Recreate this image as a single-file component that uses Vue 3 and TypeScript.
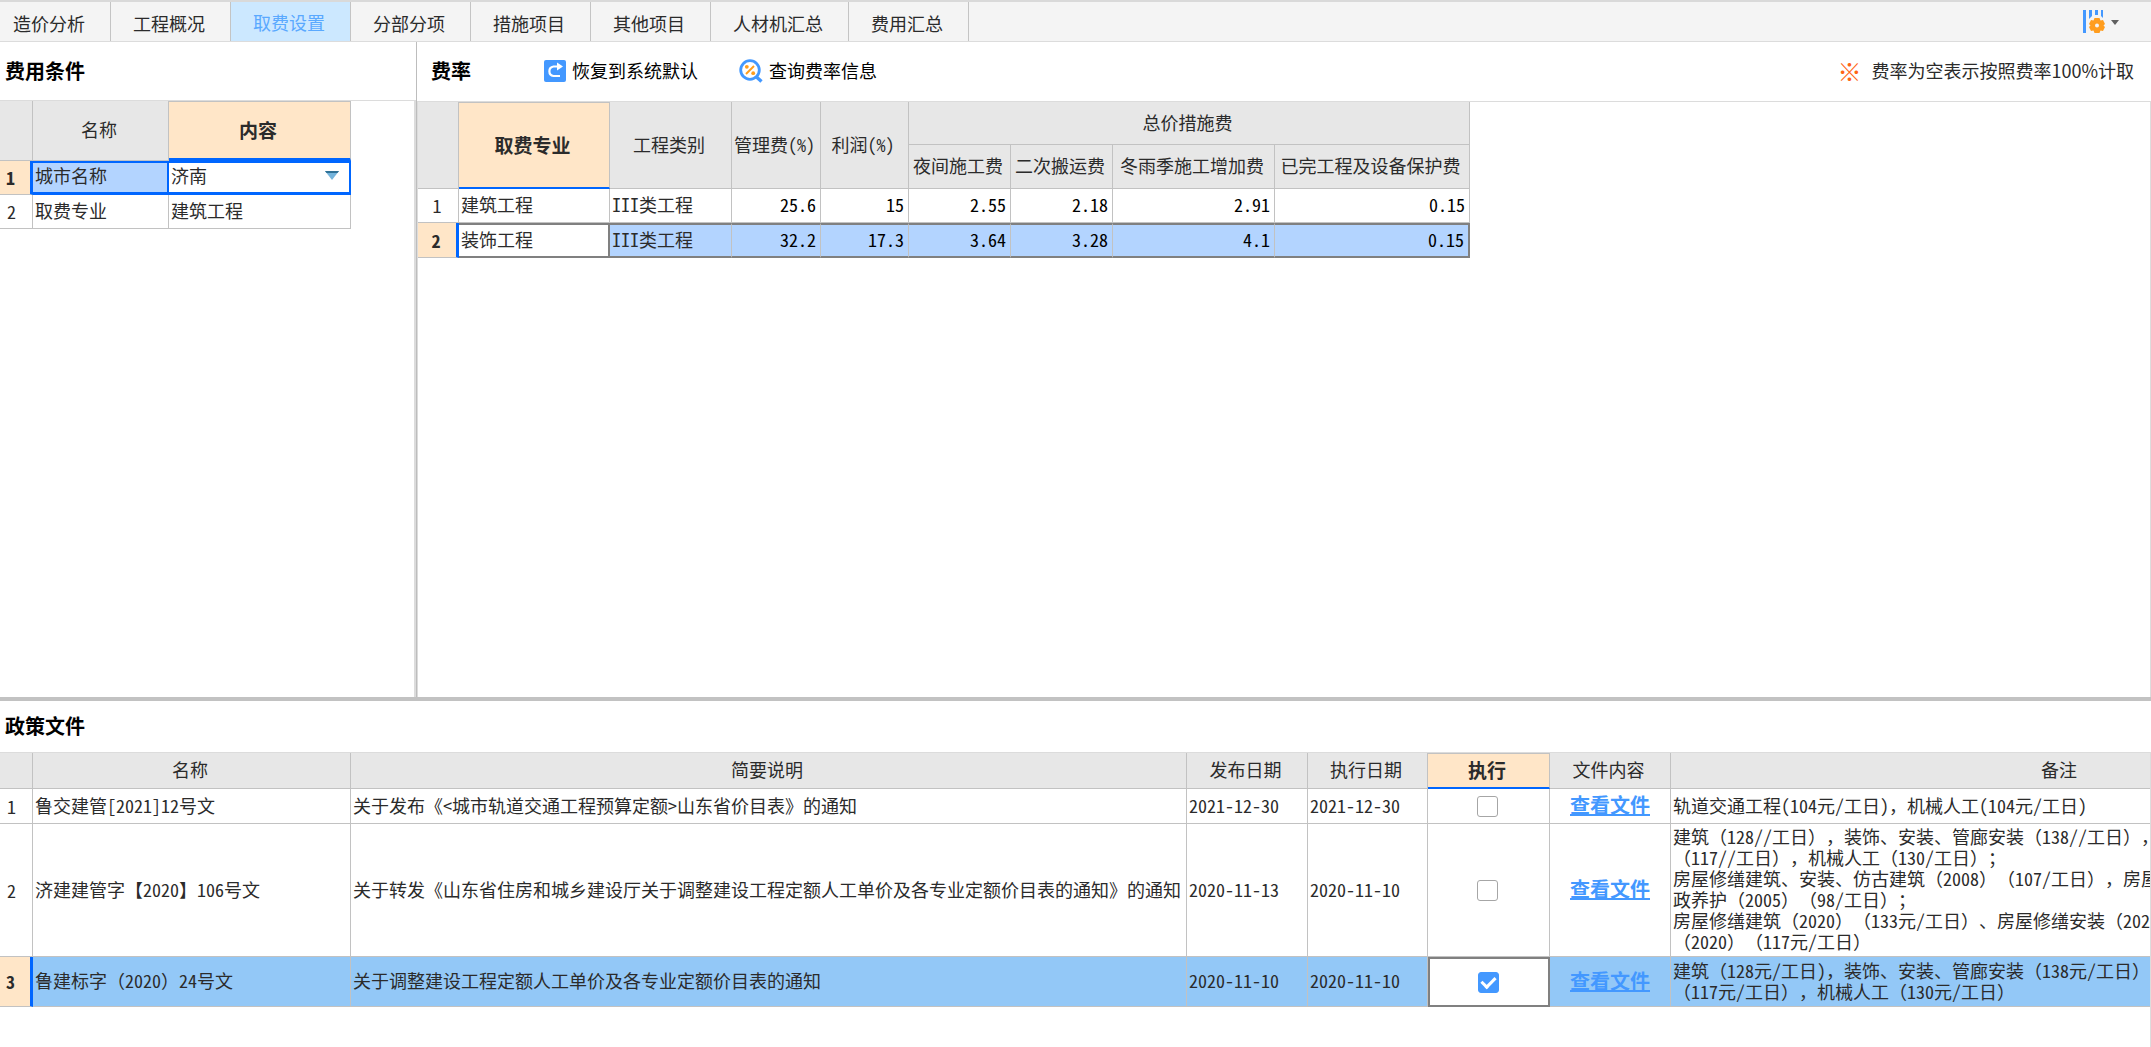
<script setup lang="ts">
import { ref } from 'vue'

interface FeeRow {
  major: string
  category: string
  rates: string[]
}

interface PolicyRow {
  name: string
  summary: string
  published: string
  effective: string
  applied: boolean
  notes: string[]
}

const tabs: string[] = ['造价分析', '工程概况', '取费设置', '分部分项', '措施项目', '其他项目', '人材机汇总', '费用汇总']
const activeTab = ref('取费设置')
const city = ref('济南')

const feeRows: FeeRow[] = [
  { major: '建筑工程', category: 'III类工程', rates: ['25.6', '15', '2.55', '2.18', '2.91', '0.15'] },
  { major: '装饰工程', category: 'III类工程', rates: ['32.2', '17.3', '3.64', '3.28', '4.1', '0.15'] },
]

const policies = ref<PolicyRow[]>([
  {
    name: '鲁交建管[2021]12号文',
    summary: '关于发布《<城市轨道交通工程预算定额>山东省价目表》的通知',
    published: '2021-12-30',
    effective: '2021-12-30',
    applied: false,
    notes: ['轨道交通工程(104元/工日)，机械人工(104元/工日)'],
  },
  {
    name: '济建建管字【2020】106号文',
    summary: '关于转发《山东省住房和城乡建设厅关于调整建设工程定额人工单价及各专业定额价目表的通知》的通知',
    published: '2020-11-13',
    effective: '2020-11-10',
    applied: false,
    notes: [
      '建筑（128//工日），装饰、安装、管廊安装（138//工日），',
      '（117//工日），机械人工（130/工日）；',
      '房屋修缮建筑、安装、仿古建筑（2008）（107/工日），房屋',
      '政养护（2005）（98/工日）；',
      '房屋修缮建筑（2020）（133元/工日）、房屋修缮安装（202',
      '（2020）（117元/工日）',
    ],
  },
  {
    name: '鲁建标字（2020）24号文',
    summary: '关于调整建设工程定额人工单价及各专业定额价目表的通知',
    published: '2020-11-10',
    effective: '2020-11-10',
    applied: true,
    notes: ['建筑（128元/工日)，装饰、安装、管廊安装（138元/工日）', '（117元/工日），机械人工（130元/工日）'],
  },
])
</script>

<template>
  <div class="page">
    <nav class="tabbar">
      <button
        v-for="tab in tabs"
        :key="tab"
        type="button"
        class="tab"
        :class="{ active: tab === activeTab }"
        @click="activeTab = tab"
      >{{ tab }}</button>
      <button type="button" class="columns-button" aria-label="列设置">
        <svg width="36" height="24" viewBox="0 0 36 24">
          <g fill="#4398ff">
            <rect x="0" y="0" width="3" height="23" />
            <path d="M6 0h3v6l-3 3z" />
            <rect x="12" y="0" width="3" height="5" />
            <path d="M18 0h2v8l-2-2z" />
          </g>
          <path fill="#ff9d1e" d="M11.500 8h5l1 2.500 2.500-.5 2 4-1.500 1.500 1.500 1.500-2 4-2.500-.5-1 2.500h-5l-1-2.500-2.500.5-2-4 1.500-1.500-1.500-1.500 2-4 2.500.5z" />
          <circle cx="14" cy="15.500" r="2" fill="#f4f4f4" />
          <path fill="#606060" d="M28 10h8l-4 5z" />
        </svg>
      </button>
    </nav>

    <main class="workspace">
      <section class="conditions">
        <header class="panel-head"><h2>费用条件</h2></header>
        <div class="panel-body">
          <table class="grid condition-grid">
            <colgroup><col class="w33"><col class="w136"><col class="w182"></colgroup>
            <thead>
              <tr><th></th><th>名称</th><th class="current">内容</th></tr>
            </thead>
            <tbody>
              <tr class="picked">
                <th class="num">1</th>
                <td><label for="city">城市名称</label></td>
                <td class="editor">
                  <div class="combo">
                    <select id="city" v-model="city"><option>济南</option></select>
                    <svg width="14" height="9" viewBox="0 0 14 9">
                      <path d="M0 0h14L7 9z" fill="#74b4dc" />
                      <path d="M0 0h14l-1.500 2h-11z" fill="#2f7196" />
                    </svg>
                  </div>
                </td>
              </tr>
              <tr><th class="num">2</th><td>取费专业</td><td>建筑工程</td></tr>
            </tbody>
          </table>
        </div>
      </section>

      <section class="rates">
        <header class="panel-head">
          <h2>费率</h2>
          <button type="button" class="tool restore">
            <svg width="22" height="22" viewBox="0 0 22 22">
              <rect width="22" height="22" rx="2" fill="#4398ff" />
              <path d="M14 6.500H9.500a4.800 4.800 0 0 0 0 9.500H16" fill="none" stroke="#fff" stroke-width="2.200" />
              <path d="M13 2.500l6 4-6 4z" fill="#fff" />
            </svg>
            <span>恢复到系统默认</span>
          </button>
          <button type="button" class="tool query">
            <svg width="24" height="24" viewBox="0 0 24 24">
              <circle cx="11" cy="11" r="9.300" fill="#fff" stroke="#4398ff" stroke-width="2.800" />
              <path d="M17.500 18l5 4.500" stroke="#4398ff" stroke-width="3.400" />
              <path d="M7 15l8-8" stroke="#ff9d1e" stroke-width="2" />
              <circle cx="7.800" cy="7.800" r="1.900" fill="#ff9d1e" />
              <circle cx="14.200" cy="14.200" r="1.900" fill="#ff9d1e" />
            </svg>
            <span>查询费率信息</span>
          </button>
          <p class="hint"><span class="mark">※</span>费率为空表示按照费率100%计取</p>
        </header>
        <div class="panel-body">
          <table class="grid rate-grid">
            <colgroup>
              <col class="w41"><col class="w151"><col class="w122"><col class="w89"><col class="w88">
              <col class="w102"><col class="w102"><col class="w162"><col class="w195">
            </colgroup>
            <thead>
              <tr>
                <th rowspan="2"></th>
                <th rowspan="2" class="current">取费专业</th>
                <th rowspan="2">工程类别</th>
                <th rowspan="2">管理费(%)</th>
                <th rowspan="2">利润(%)</th>
                <th colspan="4">总价措施费</th>
              </tr>
              <tr><th>夜间施工费</th><th>二次搬运费</th><th>冬雨季施工增加费</th><th>已完工程及设备保护费</th></tr>
            </thead>
            <tbody>
              <tr v-for="(row, i) in feeRows" :key="row.major" :class="{ picked: i === 1 }">
                <th class="num">{{ i + 1 }}</th>
                <td>{{ row.major }}</td>
                <td>{{ row.category }}</td>
                <td v-for="(rate, j) in row.rates" :key="j" class="value">{{ rate }}</td>
              </tr>
            </tbody>
          </table>
        </div>
      </section>
    </main>

    <section class="policies">
      <header class="panel-head"><h2>政策文件</h2></header>
      <div class="panel-body">
        <table class="grid policy-grid">
          <colgroup>
            <col class="w33"><col class="w318"><col class="w836"><col class="w121"><col class="w120">
            <col class="w122"><col class="w121"><col class="w780">
          </colgroup>
          <thead>
            <tr>
              <th></th><th>名称</th><th>简要说明</th><th>发布日期</th><th>执行日期</th>
              <th class="current">执行</th><th>文件内容</th><th>备注</th>
            </tr>
          </thead>
          <tbody>
            <tr v-for="(row, i) in policies" :key="row.name" :class="{ picked: i === 2 }">
              <th class="num">{{ i + 1 }}</th>
              <td>{{ row.name }}</td>
              <td>{{ row.summary }}</td>
              <td>{{ row.published }}</td>
              <td>{{ row.effective }}</td>
              <td class="check"><input v-model="row.applied" type="checkbox" :aria-label="'执行 ' + row.name"></td>
              <td class="link"><a href="#">查看文件</a></td>
              <td class="notes"><div v-for="line in row.notes" :key="line">{{ line }}</div></td>
            </tr>
          </tbody>
        </table>
      </div>
    </section>
  </div>
</template>

<style>
body {
  margin: 0;
  background: #fff;
}
</style>

<style scoped>
.page,
.page * {
  box-sizing: border-box;
}

.page {
  display: flex;
  flex-direction: column;
  min-height: 100vh;
  overflow: hidden;
  background: #fff;
  color: #2b2b2b;
  font-family: "Noto Sans Mono CJK SC", "Noto Sans CJK SC", sans-serif;
  font-size: 18px;
  line-height: 21px;
  text-spacing-trim: space-all;
}

button {
  margin: 0;
  padding: 0;
  border: 0;
  background: none;
  color: inherit;
  font: inherit;
}

svg {
  display: block;
  flex: none;
}

h2 {
  margin: 0;
  color: #000;
  font-size: 20px;
  font-weight: 700;
  line-height: 21px;
}

/* Tabs */
.tabbar {
  display: flex;
  height: 42px;
  border-top: 2px solid #d9d9d9;
  border-bottom: 1px solid #dcdcdc;
  background: #f4f4f4;
}

.tab {
  padding: 3px 25px 0 22px;
  border-right: 1px solid #c4c4c4;
  font-family: "Noto Sans CJK SC", sans-serif;
}

.tab:first-child {
  padding-left: 13px;
}

.tab.active {
  padding-top: 1px;
  background: #cce8ff;
  color: #5aa9ff;
}

.columns-button {
  align-self: center;
  margin-left: auto;
  margin-right: 32px;
}

/* Panels */
.workspace {
  display: flex;
  flex: 1;
}

.panel-head {
  display: flex;
  align-items: center;
  height: 59px;
  padding-bottom: 2px;
  border-bottom: 1px solid #dcdcdc;
}

.panel-body {
  flex: 1;
  overflow: hidden;
}

.conditions,
.rates,
.policies {
  display: flex;
  flex-direction: column;
  min-width: 0;
}

.conditions {
  flex: 0 0 417px;
  border-right: 1px solid #bdbdbd;
}

.conditions .panel-head {
  padding-left: 5px;
}

.conditions .panel-body {
  border-right: 2px solid #dcdcdc;
}

.rates {
  flex: 1;
}

.rates .panel-head {
  height: 60px;
  padding-left: 14px;
  padding-right: 17px;
}

.rates .panel-body {
  border-left: 1px solid #dcdcdc;
  border-right: 1px solid #dcdcdc;
}

.policies {
  flex: 0 0 350px;
  border-top: 4px solid #c2c2c2;
}

.policies .panel-head {
  height: 52px;
  padding-left: 5px;
}

.policies .panel-body {
  border-right: 1px solid #dcdcdc;
}

.tool {
  display: flex;
  align-items: center;
  color: #000;
}

.restore {
  gap: 6px;
  margin-left: 73px;
}

.query {
  gap: 6px;
  margin-left: 41px;
}

.hint {
  display: flex;
  align-items: center;
  gap: 10px;
  margin: 0 0 0 auto;
  font-family: "Noto Sans CJK SC", sans-serif;
}

.mark {
  color: #ff6414;
  font-size: 24px;
}

/* Grids */
.grid {
  border-collapse: separate;
  border-spacing: 0;
  table-layout: fixed;
  width: 0;
}

.w33 { width: 33px; }
.w41 { width: 41px; }
.w88 { width: 88px; }
.w89 { width: 89px; }
.w102 { width: 102px; }
.w120 { width: 120px; }
.w121 { width: 121px; }
.w122 { width: 122px; }
.w136 { width: 136px; }
.w151 { width: 151px; }
.w162 { width: 162px; }
.w182 { width: 182px; }
.w195 { width: 195px; }
.w318 { width: 318px; }
.w780 { width: 780px; }
.w836 { width: 836px; }

.grid th,
.grid td {
  padding: 0 2px 2px;
  border-right: 1px solid #c2c2c2;
  border-bottom: 1px solid #c2c2c2;
  white-space: pre;
  font-weight: 400;
  text-align: left;
  vertical-align: middle;
}

.grid thead th {
  padding: 0 3px 2px 0;
  background: #e7e7e7;
  text-align: center;
}

.grid thead th.current {
  border-top: 1px solid #c2c2c2;
  border-bottom: 2px solid #0066ff;
  background: #ffe6c8;
  font-size: 19px;
  font-weight: 700;
}

.grid tbody tr {
  height: 34px;
}

.grid .num {
  padding: 0 2px 0 0;
  text-align: center;
}

.condition-grid .num,
.policy-grid .num {
  padding-right: 9px;
}

.picked .num {
  border-right: 3px solid #0066ff;
  background: #ffe6c8;
  font-weight: 700;
}

.picked td {
  background: #b3d4ff;
}

.grid .value {
  padding-right: 4px;
  color: #000;
  text-align: right;
}

.condition-grid thead tr {
  height: 60px;
}

.condition-grid thead th.current {
  border-bottom-width: 3px;
}

.condition-grid .picked td {
  padding-bottom: 4px;
  border-right: 2px solid #0066ff;
  border-top: 2px solid #0066ff;
  border-bottom: 3px solid #0066ff;
}

.condition-grid .editor {
  background: #fff;
}

.combo {
  display: grid;
  align-items: center;
}

.combo select,
.combo svg {
  grid-area: 1 / 1;
}

.combo svg {
  justify-self: end;
  margin-right: 8px;
  pointer-events: none;
}

.combo select {
  width: 100%;
  padding: 0;
  border: 0;
  outline: 0;
  background: none;
  color: inherit;
  font: inherit;
  line-height: 21px;
  appearance: none;
}

.rate-grid thead tr {
  height: 43px;
}

.rate-grid thead tr:last-child {
  height: 44px;
}

.rate-grid tbody tr.picked {
  height: 35px;
}

.rate-grid .picked td {
  border-top: 2px solid #808080;
  border-bottom: 2px solid #808080;
}

.rate-grid .picked td:nth-child(2) {
  border-right: 2px solid #808080;
  background: #fff;
}

.rate-grid .picked td:last-child {
  border-right: 2px solid #808080;
}

.policy-grid thead tr {
  height: 36px;
}

.policy-grid tbody tr {
  height: 35px;
}

.policy-grid .notes {
  padding-top: 2px;
  padding-bottom: 4px;
}

.policy-grid tbody tr.picked {
  height: 50px;
}

.policy-grid .picked td {
  background: #93c8f7;
}

.policy-grid .check {
  padding: 0 2px 0 0;
  text-align: center;
}

.policy-grid .picked .check {
  border: 2px solid #808080;
  background: #fff;
}

.check input {
  display: block;
  width: 21px;
  height: 21px;
  margin: 0 auto;
  border: 1px solid #a6a6a6;
  border-radius: 3px;
  background: #fff;
  appearance: none;
}

.check input:checked {
  border-color: #4398ff;
  background: #4398ff;
}

.check input:checked::after {
  display: block;
  width: 6px;
  height: 11px;
  margin: 1px auto 0;
  border-right: 3px solid #fff;
  border-bottom: 3px solid #fff;
  content: "";
  transform: rotate(45deg);
}

.grid .link {
  text-align: center;
}

.link a {
  color: #4398ff;
  font-size: 20px;
  font-weight: 700;
  text-decoration: underline;
}
</style>
